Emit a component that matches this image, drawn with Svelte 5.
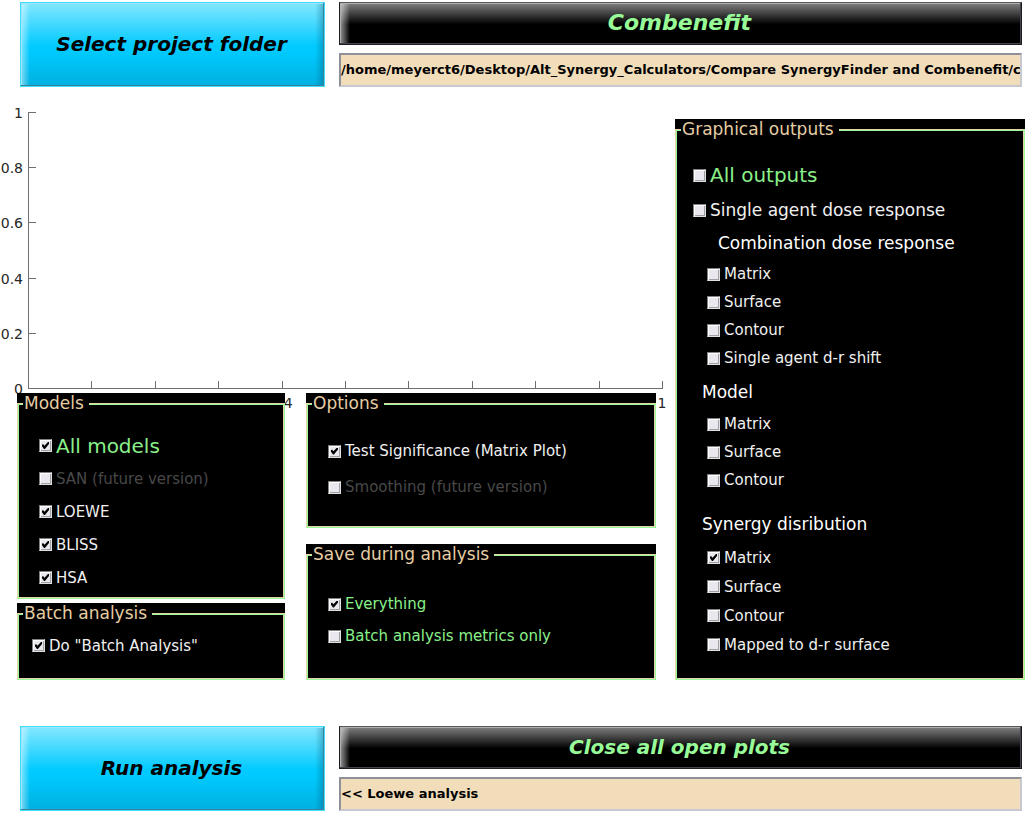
<script>
  // The panels cover the other x labels, so only these steps carry one.
  const xLabelled = [4, 10];
  const xTicks = [1, 2, 3, 4, 5, 6, 7, 8, 9, 10].map((n) => ({
    at: n * 10,
    label: xLabelled.includes(n) ? String(n / 10) : ''
  }));
  const yTicks = [0, 20, 40, 60, 80, 100].map((n) => ({ at: n, label: String(n / 100) }));

  let projectPath = $state(
    '/home/meyerct6/Desktop/Alt_Synergy_Calculators/Compare SynergyFinder and Combenefit/c'
  );
  let status = $state('<< Loewe analysis');

  let models = $state([
    { label: 'All models', on: true, kind: 'all' },
    { label: 'SAN (future version)', on: false, kind: '', disabled: true },
    { label: 'LOEWE', on: true, kind: '' },
    { label: 'BLISS', on: true, kind: '' },
    { label: 'HSA', on: true, kind: '' }
  ]);
  let batch = $state([{ label: 'Do "Batch Analysis"', on: true, kind: '' }]);
  let options = $state([
    { label: 'Test Significance (Matrix Plot)', on: true, kind: '' },
    { label: 'Smoothing (future version)', on: false, kind: '', disabled: true }
  ]);
  let saving = $state([
    { label: 'Everything', on: true, kind: 'green' },
    { label: 'Batch analysis metrics only', on: false, kind: 'green' }
  ]);
  let general = $state([
    { label: 'All outputs', on: false, kind: 'all' },
    { label: 'Single agent dose response', on: false, kind: 'wide' }
  ]);
  let groups = $state([
    {
      title: 'Combination dose response',
      name: 'combination',
      items: [
        { label: 'Matrix', on: false, kind: '' },
        { label: 'Surface', on: false, kind: '' },
        { label: 'Contour', on: false, kind: '' },
        { label: 'Single agent d-r shift', on: false, kind: '' }
      ]
    },
    {
      title: 'Model',
      name: 'model',
      items: [
        { label: 'Matrix', on: false, kind: '' },
        { label: 'Surface', on: false, kind: '' },
        { label: 'Contour', on: false, kind: '' }
      ]
    },
    {
      title: 'Synergy disribution',
      name: 'synergy',
      items: [
        { label: 'Matrix', on: true, kind: '' },
        { label: 'Surface', on: false, kind: '' },
        { label: 'Contour', on: false, kind: '' },
        { label: 'Mapped to d-r surface', on: false, kind: '' }
      ]
    }
  ]);
</script>

{#snippet checks(list)}
  {#each list as item}
    <label class="check {item.kind}" class:off={item.disabled}>
      <input type="checkbox" bind:checked={item.on} disabled={item.disabled} />
      <span>{item.label}</span>
    </label>
  {/each}
{/snippet}

<div class="page">
  <header class="bar">
    <button class="blue">Select project folder</button>
    <div class="stack">
      <button class="dark title">Combenefit</button>
      <input class="field" type="text" aria-label="Project folder" bind:value={projectPath} />
    </div>
  </header>

  <main>
    <div class="left">
      <div class="plot">
        {#each yTicks as t}
          <span class="ytick" style="bottom: {t.at}%"><span>{t.label}</span></span>
        {/each}
        {#each xTicks as t}
          <span class="xtick" style="left: {t.at}%"><span>{t.label}</span></span>
        {/each}
      </div>
      <div class="panels">
        <div class="column narrow">
          <section class="panel models">
            <fieldset>
              <legend>Models</legend>
              {@render checks(models)}
            </fieldset>
          </section>
          <section class="panel batch">
            <fieldset>
              <legend>Batch analysis</legend>
              {@render checks(batch)}
            </fieldset>
          </section>
        </div>
        <div class="column">
          <section class="panel options">
            <fieldset>
              <legend>Options</legend>
              {@render checks(options)}
            </fieldset>
          </section>
          <section class="panel saving">
            <fieldset>
              <legend>Save during analysis</legend>
              {@render checks(saving)}
            </fieldset>
          </section>
        </div>
      </div>
    </div>

    <section class="panel outputs">
      <fieldset>
        <legend>Graphical outputs</legend>
        {@render checks(general)}
        {#each groups as group}
          <div class="group {group.name}" role="group" aria-labelledby="{group.name}-title">
            <h2 id="{group.name}-title">{group.title}</h2>
            {@render checks(group.items)}
          </div>
        {/each}
      </fieldset>
    </section>
  </main>

  <footer class="bar">
    <button class="blue">Run analysis</button>
    <div class="stack">
      <button class="dark">Close all open plots</button>
      <input class="field" type="text" aria-label="Status" bind:value={status} />
    </div>
  </footer>
</div>

<style>
  :global(body) {
    margin: 0;
    background: #fff;
  }

  .page {
    --green: #98fb98;
    --tan: #e6d3a8;
    box-sizing: border-box;
    padding: 2px 0;
    overflow: hidden;
    font-family: 'DejaVu Sans', sans-serif;
    font-size: 15px;
    color: #fff;
  }

  .bar {
    display: grid;
    grid-template-columns: 305fr 683fr;
    gap: 14px;
    padding: 0 5px 0 20px;
  }

  .stack {
    display: flex;
    flex-direction: column;
    gap: 8px;
    min-width: 0;
  }

  button {
    box-sizing: border-box;
    margin: 0;
    padding: 0 2px 2px 0;
    font: italic bold 20px 'DejaVu Sans', sans-serif;
  }

  .blue {
    height: 85px;
    border: 1px solid #3fdcfc;
    color: #000;
    background:
      linear-gradient(90deg, rgba(255, 255, 255, 0.5), transparent 9px),
      linear-gradient(270deg, rgba(0, 80, 110, 0.35), transparent 9px),
      linear-gradient(#84e7ff, #00caff 52%, #00caff 58%, #00b0e0);
    box-shadow:
      inset -1px -1px #3a83a0,
      inset 1px 1px #9be6f8;
  }

  .dark {
    height: 43px;
    border: 1px solid #1c1c22;
    border-top-color: #55555a;
    color: var(--green);
    background:
      linear-gradient(90deg, rgba(255, 255, 255, 0.6), transparent 10px),
      linear-gradient(#808080, #000 52%);
    box-shadow:
      inset -1px -1px #44444c,
      inset 1px 1px #b0b0b0;
  }

  .title {
    font-size: 22px;
  }

  .field {
    box-sizing: border-box;
    width: 100%;
    height: 34px;
    margin: 0;
    padding: 0 0 2px;
    border: 2px solid;
    border-color: #909098 #c8c8d0 #c8c8d0 #909098;
    border-radius: 0;
    background: #f2ddba;
    color: #000;
    font: bold 13px 'DejaVu Sans', sans-serif;
  }

  main {
    display: grid;
    grid-template-columns: 639fr 350fr;
    gap: 19px;
    padding: 25px 2px 46px 17px;
  }

  .plot {
    position: relative;
    height: 276px;
    margin: 0 -7px 4px 11px;
    border-left: 1px solid #707070;
    border-bottom: 1px solid #707070;
    color: #262626;
    font-size: 14px;
    line-height: 18px;
  }

  .xtick,
  .ytick {
    position: absolute;
    background: #707070;
  }

  .ytick {
    left: 0;
    width: 7px;
    height: 1px;
    margin-bottom: -1px;
  }

  .xtick {
    bottom: 0;
    width: 1px;
    height: 7px;
    margin-left: -1px;
  }

  .ytick span {
    position: absolute;
    right: 13px;
    top: -8px;
  }

  .xtick span {
    position: absolute;
    top: 13px;
    left: 0;
    transform: translateX(-50%);
  }

  .panels {
    position: relative;
    display: grid;
    grid-template-columns: 268fr 350fr;
    gap: 21px;
  }

  .column {
    display: flex;
    flex-direction: column;
    gap: 16px;
  }

  .narrow {
    gap: 4px;
  }

  .panel {
    display: grid;
    background: #000;
  }

  .models {
    --row: 33px;
    --top: 16px;
    --inset: 21px;
    height: 206px;
  }

  .batch {
    --row: 33px;
    --top: 6px;
    --inset: 14px;
    height: 77px;
  }

  .options {
    --row: 36px;
    --top: 20px;
    --inset: 21px;
    height: 135px;
  }

  .saving {
    --row: 32px;
    --top: 24px;
    --inset: 21px;
    height: 136px;
  }

  .outputs {
    --row: 28px;
    --top: 18px;
    --inset: 17px;
    margin-top: 7px;
  }

  fieldset {
    min-width: 0;
    margin: 0;
    padding: var(--top) 0 0 var(--inset);
    border: 1px solid;
    border-color: var(--tan) var(--green) var(--green) var(--tan);
    box-shadow:
      inset 1px 1px var(--green),
      inset -1px -1px var(--tan);
  }

  legend {
    margin-left: calc(5px - var(--inset));
    padding: 0 5px 0 1px;
    background: #000;
    color: #e6cda3;
    font-size: 17px;
    line-height: 20px;
  }

  .check {
    display: flex;
    align-items: center;
    gap: 4px;
    height: var(--row);
    color: #f0f0f0;
    white-space: nowrap;
  }

  .check.all {
    color: #8af08a;
    font-size: 20px;
  }

  .check.green {
    color: #8af08a;
  }

  .check.wide {
    font-size: 17px;
  }

  .check.off {
    color: #484848;
  }

  .outputs .all {
    height: 36px;
  }

  .outputs .wide {
    height: 34px;
  }

  .check input {
    appearance: none;
    flex: none;
    box-sizing: border-box;
    width: 13px;
    height: 13px;
    margin: 0;
    border: 1px solid;
    border-color: #808080 #e0e0e0 #e0e0e0 #808080;
    background: #eae8ee;
    box-shadow:
      inset 1px 1px #fff,
      inset -1px -1px #a0a0a4;
  }

  .check input::before {
    content: '';
    display: block;
    width: 7px;
    height: 7px;
    margin: 2px;
    background: #000;
    clip-path: polygon(0 35%, 18% 32%, 36% 55%, 85% 0, 100% 0, 100% 28%, 42% 100%, 28% 100%, 0 60%);
    visibility: hidden;
  }

  .check input:checked::before {
    visibility: visible;
  }

  h2 {
    margin: 0;
    font-size: 17px;
    font-weight: normal;
    line-height: 32px;
    white-space: nowrap;
  }

  .group .check {
    margin-left: 14px;
  }

  .combination h2 {
    padding: 0 0 1px 25px;
  }

  .model h2 {
    padding: 4px 0 2px 9px;
  }

  .synergy h2 {
    padding: 14px 0 3px 9px;
  }

  .synergy {
    --row: 29px;
  }
</style>
